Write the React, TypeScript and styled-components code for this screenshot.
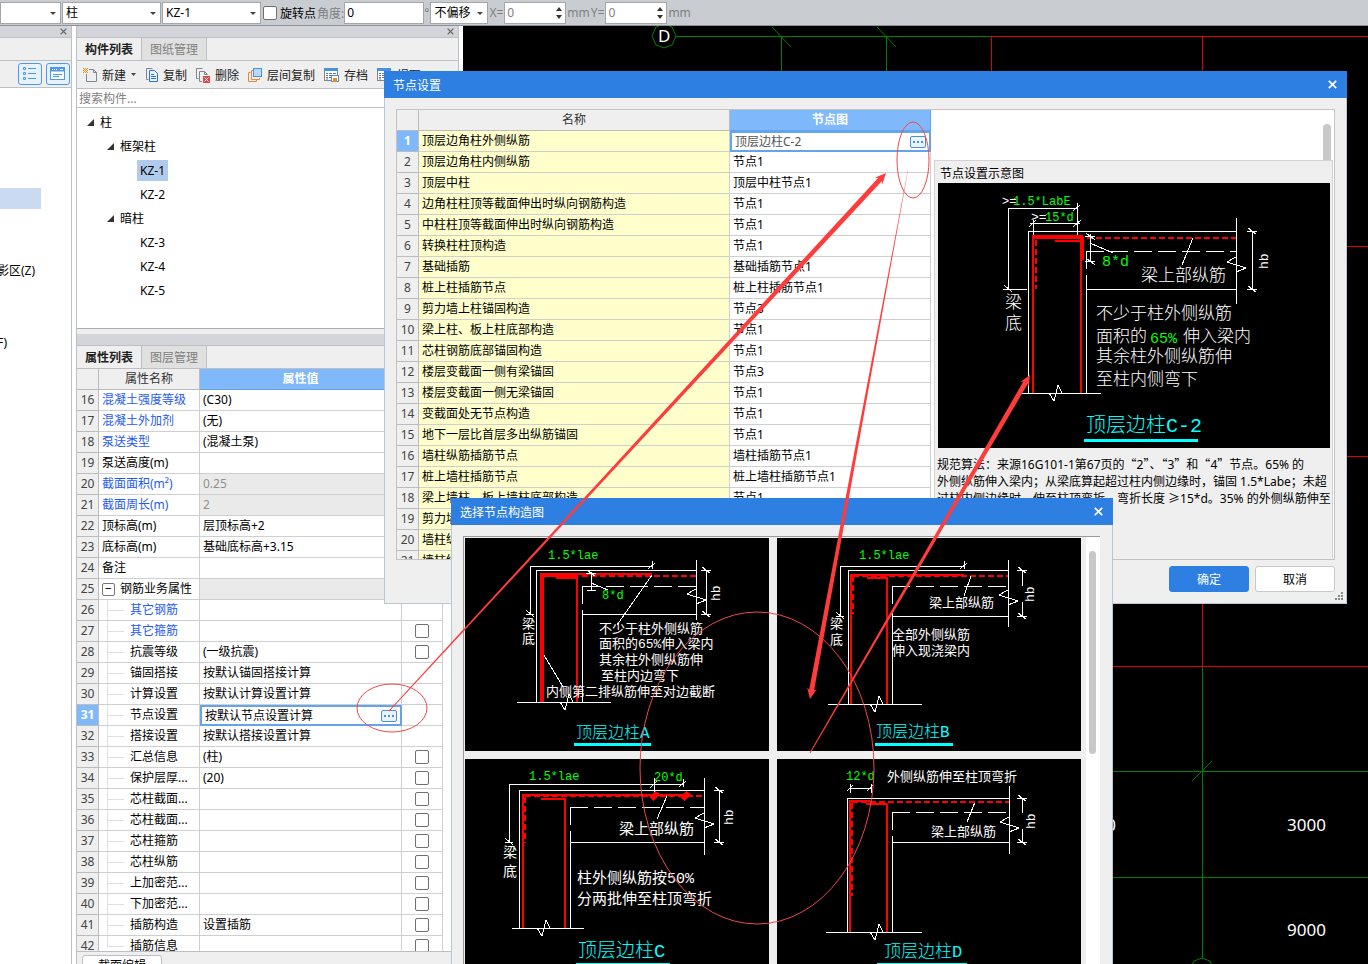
import React from "react";
import styled, { createGlobalStyle } from "styled-components";

const Global = createGlobalStyle`
  html, body, #root { height: 100%; }
  body { margin: 0; overflow: hidden; background: #fff; }
  * { box-sizing: border-box; }
  body, button, input, select, table {
    font-family: "Noto Sans", "Noto Sans CJK SC", sans-serif;
    font-size: 12px;
    color: #000;
  }
`;

/* ---------- shell ---------- */
const Shell = styled.div`
  position: relative;
  display: flex;
  flex-direction: column;
  height: 100vh;
  overflow: hidden;
`;
const OptionBar = styled.header`
  display: flex;
  align-items: center;
  flex: none;
  gap: 1px;
  height: 26px;
  background: #c9cdd1;
  border-bottom: 1px solid #8b9196;
  white-space: nowrap;
`;
const Combo = styled.label<{ $w: number }>`
  position: relative;
  display: flex;
  width: ${(p) => p.$w}px;
  height: 22px;
  &::after {
    content: "";
    position: absolute;
    right: 5px;
    top: 10px;
    border: 3px solid transparent;
    border-top-color: #444;
    border-bottom: 0;
  }
  select {
    appearance: none;
    width: 100%;
    padding: 0 3px;
    border: 1px solid #a3a7aa;
    border-radius: 0;
    background: #fff;
  }
`;
const Check = styled.input.attrs({ type: "checkbox" })`
  appearance: none;
  flex: none;
  width: 14px;
  height: 14px;
  margin: 0;
  border: 1px solid #707070;
  border-radius: 2px;
  background: #fff;
  vertical-align: middle;
`;
const CheckLabel = styled.label`
  display: flex;
  align-items: center;
  gap: 3px;
  margin-left: 1px;
`;
const Dim = styled.label<{ $gap?: number }>`
  display: flex;
  align-items: center;
  gap: ${(p) => p.$gap ?? 0}px;
  color: #808080;
`;
const Field = styled.input<{ $w: number }>`
  width: ${(p) => p.$w}px;
  height: 22px;
  padding: 0 2px;
  border: 1px solid #a3a7aa;
  background: #fff;
  &:disabled { color: #808080; }
`;
const Spin = styled.span`
  position: relative;
  display: flex;
  &::before, &::after {
    content: "";
    position: absolute;
    right: 4px;
    border: 3px solid transparent;
  }
  &::before { top: 5px; border-bottom: 4px solid #333; border-top: 0; }
  &::after { bottom: 5px; border-top: 4px solid #333; border-bottom: 0; }
`;
const Body = styled.main`
  display: flex;
  flex: 1;
  min-height: 0;
`;

/* ---------- docked panels ---------- */
const SidePanel = styled.aside`
  display: flex;
  flex-direction: column;
  flex: none;
  width: 72px;
  margin-right: 4px;
  border-right: 1px solid #bcbfc6;
`;
const Dock = styled.section`
  display: flex;
  flex-direction: column;
  flex: none;
  width: 383px;
  margin-right: 4px;
  border: solid #bcbfc6;
  border-width: 0 1px;
  background: #efefef;
`;
const Strip = styled.div`
  display: flex;
  align-items: center;
  justify-content: flex-end;
  flex: none;
  height: 12px;
  padding-right: 4px;
  background: #d3d5da;
  border-bottom: 1px solid #bcbfc6;
`;
const TinyClose = styled.button`
  display: flex;
  padding: 0;
  border: 0;
  background: none;
`;
const SideBlank = styled.div`
  flex: none;
  height: 23px;
  background: #efefef;
  border-bottom: 1px solid #bcbfc6;
`;
const ViewButtons = styled.div`
  display: flex;
  justify-content: flex-end;
  align-items: center;
  flex: none;
  gap: 4px;
  height: 27px;
  padding-right: 1px;
  background: #efefef;
  border-bottom: 1px solid #bcbfc6;
`;
const ViewButton = styled.button`
  display: flex;
  align-items: center;
  justify-content: center;
  width: 24px;
  height: 22px;
  padding: 0;
  border: 1px solid #4a9bf0;
  border-radius: 3px;
  background: #e8f2fc;
`;
const SideList = styled.ul`
  flex: 1;
  margin: 0;
  padding: 100px 0 0;
  list-style: none;
  line-height: 21px;
  overflow: hidden;
  white-space: nowrap;
`;
const SideItem = styled.li<{ $gap?: number; $on?: boolean }>`
  width: 41px;
  height: 21px;
  margin-bottom: ${(p) => p.$gap ?? 0}px;
  text-indent: -3px;
  background: ${(p) => (p.$on ? "#c9daf1" : "none")};
`;
const Tabs = styled.div`
  display: flex;
  flex: none;
  height: 23px;
  border-bottom: 1px solid #bcbfc6;
`;
const Tab = styled.button<{ $on?: boolean }>`
  width: 65px;
  padding: 0;
  border: 0;
  border-right: 1px solid #bcbfc6;
  background: ${(p) => (p.$on ? "#efefef" : "#e0e0e0")};
  color: ${(p) => (p.$on ? "#222" : "#808080")};
  font-weight: ${(p) => (p.$on ? 700 : 400)};
`;
const Tools = styled.div`
  display: flex;
  align-items: center;
  flex: none;
  gap: 8px;
  height: 28px;
  padding-left: 6px;
  border-bottom: 1px solid #bcbfc6;
  overflow: hidden;
`;
const Tool = styled.button`
  display: flex;
  align-items: center;
  flex: none;
  gap: 4px;
  padding: 0;
  border: 0;
  background: none;
  color: #222;
`;
const Search = styled.input`
  flex: none;
  height: 19px;
  padding: 0 2px;
  border: 0;
  border-bottom: 1px solid #bcbfc6;
  &::placeholder { color: #808080; }
`;
const Tree = styled.ul`
  flex: none;
  height: 221px;
  margin: 0 0 5px;
  padding: 2px 0 0;
  list-style: none;
  background: #fff;
  border-bottom: 1px solid #a8abb0;
`;
const TreeRow = styled.li<{ $level: number }>`
  display: flex;
  align-items: center;
  gap: 3px;
  height: 24px;
  padding-left: ${(p) => 10 + p.$level * 20}px;
`;
const TreeName = styled.button<{ $on?: boolean }>`
  height: 21px;
  padding: 0 3px;
  border: 0;
  background: ${(p) => (p.$on ? "#b0cbec" : "none")};
`;

/* ---------- tables ---------- */
const Clip = styled.div`
  flex: 1;
  min-height: 0;
  overflow: hidden;
  background: #fff;
`;
const Grid = styled.table`
  table-layout: fixed;
  border-spacing: 0;
  line-height: 18px;
  white-space: nowrap;
  th, td {
    height: 21px;
    padding: 0 3px;
    border: solid #cfcfcf;
    border-width: 0 1px 1px 0;
    text-align: left;
    font-weight: 400;
    overflow: hidden;
  }
`;
const HeadCell = styled.th<{ $on?: boolean }>`
  && {
    text-align: center;
    background: ${(p) => (p.$on ? "#80b9fb" : "#efefef")};
    color: ${(p) => (p.$on ? "#fff" : "#333")};
    font-weight: ${(p) => (p.$on ? 700 : 400)};
    border-color: ${(p) => (p.$on ? "#63a4ec" : "#bcbcbc")};
  }
`;
const RowNo = styled.th<{ $on?: boolean }>`
  && {
    padding: 0;
    text-align: center;
    background: ${(p) => (p.$on ? "#80b9fb" : "#efefef")};
    color: ${(p) => (p.$on ? "#fff" : "#444")};
    font-weight: ${(p) => (p.$on ? 700 : 400)};
    border-color: #bcbcbc;
  }
`;
const PropName = styled.td<{ $link?: boolean; $level?: number }>`
  && {
    position: relative;
    color: ${(p) => (p.$link ? "#1e5af5" : "#000")};
    padding-left: ${(p) => (p.$level ? 31 : 3)}px;
  }
`;
const Branch = styled.span<{ $last?: boolean }>`
  position: absolute;
  left: 8px;
  top: 0;
  width: 1px;
  height: ${(p) => (p.$last ? "10px" : "21px")};
  background: #e0e0e0;
  &::after {
    content: "";
    position: absolute;
    top: 10px;
    width: 17px;
    height: 1px;
    background: #e0e0e0;
  }
`;
const GroupCell = styled.span`
  display: flex;
  align-items: center;
  gap: 5px;
`;
const Fold = styled.button`
  display: flex;
  align-items: center;
  justify-content: center;
  width: 13px;
  height: 13px;
  padding: 0;
  border: 1px solid #777;
  border-radius: 2px;
  background: #fff;
  line-height: 10px;
`;
const Value = styled.td<{ $muted?: boolean; $yellow?: boolean }>`
  && {
    background: ${(p) => (p.$muted ? "#eaeaea" : p.$yellow ? "#ffffcc" : "#fff")};
    color: ${(p) => (p.$muted ? "#909090" : "#000")};
  }
`;
const EditCell = styled.td`
  && { padding: 0; border: 0; }
`;
const Editing = styled.div<{ $muted?: boolean }>`
  display: flex;
  align-items: center;
  justify-content: space-between;
  height: 21px;
  padding: 0 3px 0 3px;
  border: 2px solid #63a4ec;
  background: #fff;
  color: ${(p) => (p.$muted ? "#555" : "#000")};
`;
const More = styled.button`
  display: flex;
  align-items: center;
  justify-content: center;
  gap: 2px;
  width: 16px;
  height: 12px;
  padding: 0;
  border: 1px solid #4a90d9;
  border-radius: 2px;
  background: #eaf3fc;
  i { width: 2px; height: 2px; background: #4a90d9; }
`;
const CheckCell = styled.td`
  && { text-align: center; line-height: 0; }
`;
const TableArea = styled.div`
  display: flex;
  flex: 1;
  min-height: 0;
  background: #fff;
`;
const Track = styled.div`
  flex: none;
  width: 10px;
`;
const PropThumb = styled.div`
  width: 6px;
  height: 530px;
  margin-left: 4px;
  border-radius: 3px;
  background: #c8c8c8;
`;
const DockFoot = styled.footer`
  flex: none;
  height: 13px;
  padding: 3px 5px 0;
  border-top: 1px solid #bcbfc6;
  overflow: hidden;
`;
const FootTab = styled.button`
  display: block;
  width: 80px;
  height: 22px;
  padding: 0;
  border: 1px solid #bcbfc6;
  border-radius: 3px;
  background: #fff;
  line-height: 18px;
`;

/* ---------- drawing area ---------- */
const Viewport = styled.section`
  flex: 1;
  min-width: 0;
  background: #000;
  svg { display: block; width: 100%; height: 100%; }
`;

/* ---------- dialogs ---------- */
const Dialog = styled.section<{ $x: number; $y: number; $w: number }>`
  position: absolute;
  left: ${(p) => p.$x}px;
  top: ${(p) => p.$y}px;
  width: ${(p) => p.$w}px;
  background: #efefef;
  border: 1px solid #bcc7d6;
  border-top: 0;
`;
const TitleBar = styled.header`
  display: flex;
  align-items: center;
  justify-content: space-between;
  height: 27px;
  margin: 0 -1px;
  padding: 0 10px 0 9px;
  background: #2d80e2;
  color: #fff;
`;
const TitleText = styled.h2`
  margin: 0;
  font-size: 12px;
  font-weight: 400;
`;
const CloseButton = styled.button`
  display: flex;
  padding: 0;
  border: 0;
  background: none;
`;
const SettingsBody = styled.div`
  display: flex;
  height: 451px;
  margin: 11px 11px 6px;
  border: 1px solid #c4c4c4;
  overflow: hidden;
`;
const NodeTable = styled.div`
  flex: none;
  width: 534px;
  overflow: hidden;
`;
const Detail = styled.div`
  display: flex;
  flex-direction: column;
  flex: 1;
  min-width: 0;
  background: #fff;
`;
const DetailTop = styled.div`
  display: flex;
  justify-content: flex-end;
  flex: none;
  height: 50px;
  padding: 14px 3px 0 0;
`;
const ThumbTop = styled.div`
  width: 8px;
  border-radius: 4px 4px 0 0;
  background: #c8c8c8;
`;
const Sample = styled.div`
  flex: 1;
  margin: 0 1px 0 3px;
  padding: 0 3px;
  background: #efefef;
  border: 1px solid #d4d4d4;
  border-bottom: 0;
  overflow: hidden;
`;
const SampleTitle = styled.h3`
  margin: 0;
  padding: 4px 2px 1px;
  font-size: 12px;
  font-weight: 400;
  line-height: 17px;
`;
const Note = styled.p`
  margin: 7px 0 0 -1px;
  line-height: 17px;
  white-space: pre;
`;
const Quote = styled.span`
  font-family: "Noto Sans CJK SC", sans-serif;
`;
const Buttons = styled.footer`
  display: flex;
  justify-content: flex-end;
  gap: 6px;
  height: 37px;
  padding-right: 11px;
`;
const Action = styled.button<{ $primary?: boolean }>`
  width: 80px;
  height: 26px;
  padding: 0;
  border: 1px solid ${(p) => (p.$primary ? "#2d80e2" : "#c8c8c8")};
  border-radius: 3px;
  background: ${(p) => (p.$primary ? "#2d80e2" : "#fff")};
  color: ${(p) => (p.$primary ? "#fff" : "#000")};
`;
const Grip = styled.svg`
  position: absolute;
  right: 2px;
  bottom: 2px;
`;
const PickerBody = styled.div`
  display: flex;
  height: 461px;
  margin: 11px 12px 0 11px;
  border: solid #9a9a9a;
  border-width: 1px 0 0 1px;
  overflow: hidden;
`;
const Gallery = styled.div`
  display: grid;
  grid-template-columns: 304px 304px;
  grid-auto-rows: 213px;
  gap: 8px;
  padding: 1px;
`;
const Card = styled.button`
  display: block;
  padding: 0;
  border: 0;
  background: #000;
`;
const PickerTrack = styled.div`
  width: 15px;
  margin-left: 4px;
  padding: 14px 4px 0 3px;
  background: #fff;
`;
const PickerThumb = styled.div`
  height: 203px;
  border-radius: 4px;
  background: #c8c8c8;
`;

/* ---------- section drawings ---------- */
const Sheet = styled.svg`
  display: block;
  background: #000;
  line, path { fill: none; stroke: #fff; stroke-width: 1; shape-rendering: crispEdges; }
  .bar { stroke: #f00; stroke-width: 2; }
  .thick { stroke: #f00; stroke-width: 4; }
  .dash { stroke: #f00; stroke-width: 2; stroke-dasharray: 6 3; }
  .under { stroke: #0ff; stroke-width: 3; }
  .fill { fill: #f00; stroke: none; }
`;
const T = styled.text<{ $s: number; $c?: string }>`
  font-family: "Liberation Mono", "Noto Sans CJK SC", monospace;
  font-size: ${(p) => p.$s}px;
  font-weight: ${(p) => (p.$s < 16 ? 400 : 300)};
  fill: ${(p) => p.$c ?? "#fff"};
`;
const GREEN = "#0f0";
const CYAN = "#0ff";

type JointProps = {
  ox: number; oy: number; ix: number; rx: number; sy: number; fy: number;
  by: number; b0: number; b1: number; bz: number;
  r0: number; r1: number; hx: number; ht: number; split?: boolean;
};

/* Column outline, beam outline, break marks and the beam height dimension. */
function Joint({ ox, oy, ix, rx, sy, fy, by, b0, b1, bz, r0, r1, hx, ht, split }: JointProps) {
  const mid = Math.round((oy + fy) / 2);
  return (
    <>
      <path d={`M${ox} ${by}V${oy}H${rx}`} />
      <path d={`M${ix} ${sy}V${sy + 18}M${ix} ${sy + 24}V${by}`} />
      <path d={`M${ix} ${sy}H${rx}`} strokeDasharray="18 6" />
      <path d={`M${ix} ${fy}H${rx}`} />
      <path d={`M${rx} ${r0}V${r1}M${rx} ${mid - 3}l-9 5l19 6l-10 4`} />
      <path d={`M${b0} ${by}H${b1}M${bz} ${by}l5 8l4 -16l4 8`} />
      <path d={split ? `M${hx} ${oy}V${mid - 7}M${hx} ${mid + 9}V${fy}` : `M${hx} ${oy}V${fy}`} />
      <path d={`M${hx - 5} ${oy}h10M${hx - 5} ${fy}h10M${hx - 4} ${oy - 3}l8 6M${hx - 4} ${fy - 3}l8 6`} />
      <T $s={13} x={0} y={0} transform={`translate(${ht} ${mid + 9}) rotate(-90)`}>hb</T>
    </>
  );
}

/* Anchor length dimension running from the beam soffit up and over the column. */
function Anchor({ x, y, end, foot }: { x: number; y: number; end: number; foot: number }) {
  return (
    <path d={`M${x - 4} ${foot}h8M${x - 4} ${foot - 4}l8 7M${x} ${foot}V${y}H${end}M${end} ${y - 5}v8M${end - 4} ${y + 3}l7 -6`} />
  );
}

function SheetC2() {
  return (
    <Sheet width="392" height="265" role="img" aria-label="顶层边柱C-2">
      <Joint ox={90} oy={48} ix={148} rx={298} sy={68} fy={106} by={210} b0={83} b1={163} bz={111} r0={35} r1={121} hx={314} ht={330} />
      <Anchor x={70} y={25} end={139} foot={106} />
      <path d="M65 106h24M95 37v18M139 21v35M92 40h50M91 44l7 -7M135 44l8 -7" />
      <path className="bar" d="M95 210V53H145M117 58h27M143 53V210" />
      <path className="thick" d="M95 54H145M144 54V77" />
      <path className="dash" d="M98 57V106M95 55H298" />
      <path d="M152 51V78M147 53h10M147 78h10M148 50l9 7M148 75l9 7M152 60L175 70M255 55L244 82" />
      <T $s={12} x={64} y={22}>&gt;=</T>
      <T $s={12} $c={GREEN} x={75} y={22}>1.5*LabE</T>
      <T $s={13} x={93} y={38}>&gt;=</T>
      <T $s={12} $c={GREEN} x={107} y={38}>15*d</T>
      <T $s={15} $c={GREEN} x={164} y={83}>8*d</T>
      <T $s={17} x={203} y={98}>梁上部纵筋</T>
      <T $s={17} x={67} y={125}>梁</T>
      <T $s={17} x={67} y={146}>底</T>
      <T $s={17} x={158} y={136}>不少于柱外侧纵筋</T>
      <T $s={17} x={158} y={159}>面积的</T>
      <T $s={15} $c={GREEN} x={212} y={160}>65%</T>
      <T $s={17} x={245} y={159}>伸入梁内</T>
      <T $s={17} x={158} y={179}>其余柱外侧纵筋伸</T>
      <T $s={17} x={158} y={202}>至柱内侧弯下</T>
      <T $s={20} $c={CYAN} x={148} y={249}>顶层边柱C-2</T>
      <path className="under" d="M146 257H260" />
    </Sheet>
  );
}

function SheetA() {
  return (
    <Sheet width="304" height="213" role="img" aria-label="顶层边柱A">
      <Joint ox={71} oy={32} ix={117} rx={231} sy={48} fy={76} by={164} b0={52} b1={146} bz={95} r0={22} r1={82} hx={241} ht={255} />
      <Anchor x={65} y={28} end={187} foot={76} />
      <path className="thick" d="M77 164V37H113" />
      <path className="bar" d="M75 36H187M91 40h22M112 36V164" />
      <path className="thick" d="M91 39H113" />
      <path className="dash" d="M117 38H231" />
      <path d="M126 34V52M121 35h10M122 52h9M122 32l8 6M126 45L143 52M187 37L152 87M79 117L98 149" />
      <T $s={12} $c={GREEN} x={83} y={21}>1.5*lae</T>
      <T $s={12} $c={GREEN} x={137} y={61}>8*d</T>
      <T $s={13} x={57} y={90}>梁</T>
      <T $s={13} x={57} y={105}>底</T>
      <T $s={13} x={134} y={95}>不少于柱外侧纵筋</T>
      <T $s={13} x={134} y={110}>面积的65%伸入梁内</T>
      <T $s={13} x={134} y={126}>其余柱外侧纵筋伸</T>
      <T $s={13} x={136} y={142}>至柱内边弯下</T>
      <T $s={13} x={81} y={158}>内侧第二排纵筋伸至对边截断</T>
      <T $s={16} $c={CYAN} x={111} y={200}>顶层边柱A</T>
      <path className="under" d="M109 206H186" />
    </Sheet>
  );
}

function SheetB() {
  return (
    <Sheet width="304" height="213" role="img" aria-label="顶层边柱B">
      <Joint ox={71} oy={32} ix={115} rx={231} sy={48} fy={78} by={166} b0={51} b1={145} bz={93} r0={22} r1={89} hx={245} ht={257} split />
      <Anchor x={63} y={28} end={187} foot={78} />
      <path className="bar" d="M74 166V37H187M90 40h20M110 39V166" />
      <path className="dash" d="M76 38V76M76 38H231" />
      <path d="M194 38L187 58" />
      <T $s={12} $c={GREEN} x={82} y={21}>1.5*lae</T>
      <T $s={13} x={152} y={69}>梁上部纵筋</T>
      <T $s={13} x={53} y={90}>梁</T>
      <T $s={13} x={53} y={106}>底</T>
      <T $s={13} x={115} y={101}>全部外侧纵筋</T>
      <T $s={13} x={115} y={117}>伸入现浇梁内</T>
      <T $s={16} $c={CYAN} x={99} y={199}>顶层边柱B</T>
      <path className="under" d="M98 206H176" />
    </Sheet>
  );
}

function SheetC() {
  return (
    <Sheet width="304" height="213" role="img" aria-label="顶层边柱C">
      <Joint ox={54} oy={31} ix={105} rx={239} sy={48} fy={83} by={169} b0={47} b1={119} bz={72} r0={19} r1={96} hx={254} ht={268} />
      <Anchor x={44} y={25} end={218} foot={83} />
      <path d="M189 19v14M185 29l7 -7M202 37L192 60" />
      <path className="bar" d="M58 169V36H220M76 40h24M100 39V169" />
      <path className="dash" d="M60 38V84M60 37H239" />
      <path className="fill" d="M184 38l6 -6l5 3l-6 7zM215 38l6 -6l5 3l-6 7z" />
      <T $s={12} $c={GREEN} x={64} y={21}>1.5*lae</T>
      <T $s={12} $c={GREEN} x={189} y={22}>20*d</T>
      <T $s={15} x={154} y={75}>梁上部纵筋</T>
      <T $s={14} x={38} y={98}>梁</T>
      <T $s={14} x={38} y={117}>底</T>
      <T $s={15} x={112} y={124}>柱外侧纵筋按50%</T>
      <T $s={15} x={112} y={145}>分两批伸至柱顶弯折</T>
      <T $s={19} $c={CYAN} x={113} y={198}>顶层边柱C</T>
      <path className="under" d="M111 205H205" />
    </Sheet>
  );
}

function SheetD() {
  return (
    <Sheet width="304" height="213" role="img" aria-label="顶层边柱D">
      <Joint ox={70} oy={39} ix={115} rx={232} sy={53} fy={83} by={173} b0={49} b1={145} bz={93} r0={27} r1={95} hx={245} ht={258} split />
      <path d="M73 25v9M94 25v9M73 29H94M70 32l6 -6M90 32l6 -6M198 43L190 63" />
      <path className="bar" d="M73 173V42H93M89 45h21M110 45V173" />
      <path className="dash" d="M75 44V137M75 43H232" />
      <T $s={12} $c={GREEN} x={69} y={21}>12*d</T>
      <T $s={13} x={110} y={22}>外侧纵筋伸至柱顶弯折</T>
      <T $s={13} x={154} y={77}>梁上部纵筋</T>
      <T $s={17} $c={CYAN} x={107} y={198}>顶层边柱D</T>
      <path className="under" d="M100 205H190" />
    </Sheet>
  );
}

/* ---------- icons ---------- */
const Cross = ({ size, color }: { size: number; color: string }) => (
  <svg width={size} height={size} viewBox="0 0 8 8">
    <path d="M0.7 0.7L7.3 7.3M7.3 0.7L0.7 7.3" stroke={color} strokeWidth="1.5" />
  </svg>
);
const Expander = () => (
  <svg width="7" height="7" viewBox="0 0 7 7">
    <path d="M7 0V7H0Z" fill="#333" />
  </svg>
);
const NewIcon = () => (
  <svg width="15" height="16" fill="none">
    <path d="M6 2.500H10.500L13.500 5.500V14.500H3.500V7M10.500 2.500V5.500H13.500" stroke="#7d8790" />
    <path d="M0 1h1v1h-1zM2 1h1v1h-1zM4 1h1v1h-1zM1 2h1v1h-1zM3 2h1v1h-1zM0 3h1v1h-1zM4 3h1v1h-1zM2 3h1v1h-1zM1 4h1v1h-1zM3 4h1v1h-1zM0 5h1v1h-1zM2 5h1v1h-1zM4 5h1v1h-1z" fill="#f08a1d" />
  </svg>
);
const CopyIcon = () => (
  <svg width="14" height="16" fill="none">
    <path d="M3.500 12.500H1.500V1.500H7.500" stroke="#7d8790" />
    <path d="M4.500 3.500H9.500L12.500 6.500V14.500H4.500Z" fill="#e8f2fc" stroke="#2d74cc" />
    <path d="M6 7.500h3M6 9.500h5M6 11.500h5" stroke="#2d74cc" />
  </svg>
);
const DeleteIcon = () => (
  <svg width="16" height="16" fill="none">
    <path d="M3.500 11.500H1.500V1.500H7.500M7 14.500H4.500V4.500H9.500L12.500 7.500V8M9.500 4.500V7.500H12" stroke="#7d8790" />
    <rect x="8" y="9" width="7" height="7" fill="#d94848" />
    <path d="M9.500 10.500l4 4M13.500 10.500l-4 4" stroke="#fff" />
  </svg>
);
const LayerIcon = () => (
  <svg width="16" height="16" fill="none">
    <path d="M3.500 5.500H1.500V14.500H9.500V12M6 3.500H4.500V12.500H12.500V11" stroke="#e58a3c" />
    <rect x="6.500" y="1.500" width="8" height="8" fill="#b9d8fb" stroke="#4a90e2" />
  </svg>
);
const ArchiveIcon = ({ orange = true }: { orange?: boolean }) => (
  <svg width="17" height="16" fill="none">
    <rect x="1.500" y="1.500" width="13" height="12" fill="#fff" stroke="#7d8790" />
    <path d="M1 2.500h14" stroke="#4a90e2" strokeWidth="3" />
    <path d="M3 6.500h2M6 6.500h3M10 6.500h3M3 8.500h2M6 8.500h3M3 10.500h2M6 10.500h2M3 12h2" stroke="#6d7882" />
    <rect x="8.500" y="8.500" width="7" height="6" fill="#fff" stroke="#4a90e2" />
    <rect x="10" y="11" width="4" height="4" fill={orange ? "#f08a1d" : "#4a90e2"} />
  </svg>
);
const ListIcon = () => (
  <svg width="14" height="14" fill="none" stroke="#4a9bf0">
    <path d="M0.500 0.500h2v2h-2zM0.500 5.500h2v2h-2zM0.500 10.500h2v2h-2zM5 1.500h8M5 6.500h8M5 11.500h8" />
  </svg>
);
const CardIcon = () => (
  <svg width="16" height="14" fill="none" stroke="#4a9bf0">
    <rect x="0.500" y="0.500" width="14" height="12" fill="#fff" />
    <path d="M0 2.500h15" strokeWidth="4" />
    <path d="M3 7.500h9M3 9.500h6" />
    <path d="M2 2.500h1M4 2.500h1M6 2.500h1M10 2.500h3" stroke="#fff" />
  </svg>
);
const Caret = () => (
  <svg width="7" height="4">
    <path d="M1 0H6L3.500 3Z" fill="#444" />
  </svg>
);

/* ---------- data ---------- */
type Prop = { no: number; name: string; value?: string; link?: boolean; muted?: boolean; check?: boolean };
const props: Prop[] = [
  { no: 16, name: "混凝土强度等级", value: "(C30)", link: true },
  { no: 17, name: "混凝土外加剂", value: "(无)", link: true },
  { no: 18, name: "泵送类型", value: "(混凝土泵)", link: true },
  { no: 19, name: "泵送高度(m)" },
  { no: 20, name: "截面面积(m²)", value: "0.25", link: true, muted: true },
  { no: 21, name: "截面周长(m)", value: "2", link: true, muted: true },
  { no: 22, name: "顶标高(m)", value: "层顶标高+2" },
  { no: 23, name: "底标高(m)", value: "基础底标高+3.15" },
  { no: 24, name: "备注" },
  { no: 25, name: "钢筋业务属性", muted: true },
  { no: 26, name: "其它钢筋", link: true },
  { no: 27, name: "其它箍筋", link: true, check: true },
  { no: 28, name: "抗震等级", value: "(一级抗震)", check: true },
  { no: 29, name: "锚固搭接", value: "按默认锚固搭接计算" },
  { no: 30, name: "计算设置", value: "按默认计算设置计算" },
  { no: 31, name: "节点设置", value: "按默认节点设置计算" },
  { no: 32, name: "搭接设置", value: "按默认搭接设置计算" },
  { no: 33, name: "汇总信息", value: "(柱)", check: true },
  { no: 34, name: "保护层厚...", value: "(20)", check: true },
  { no: 35, name: "芯柱截面...", check: true },
  { no: 36, name: "芯柱截面...", check: true },
  { no: 37, name: "芯柱箍筋", check: true },
  { no: 38, name: "芯柱纵筋", check: true },
  { no: 39, name: "上加密范...", check: true },
  { no: 40, name: "下加密范...", check: true },
  { no: 41, name: "插筋构造", value: "设置插筋", check: true },
  { no: 42, name: "插筋信息", check: true },
];
const nodes: [string, string][] = [
  ["顶层边角柱外侧纵筋", "顶层边柱C-2"],
  ["顶层边角柱内侧纵筋", "节点1"],
  ["顶层中柱", "顶层中柱节点1"],
  ["边角柱柱顶等截面伸出时纵向钢筋构造", "节点1"],
  ["中柱柱顶等截面伸出时纵向钢筋构造", "节点1"],
  ["转换柱柱顶构造", "节点1"],
  ["基础插筋", "基础插筋节点1"],
  ["桩上柱插筋节点", "桩上柱插筋节点1"],
  ["剪力墙上柱锚固构造", "节点3"],
  ["梁上柱、板上柱底部构造", "节点1"],
  ["芯柱钢筋底部锚固构造", "节点1"],
  ["楼层变截面一侧有梁锚固", "节点3"],
  ["楼层变截面一侧无梁锚固", "节点1"],
  ["变截面处无节点构造", "节点1"],
  ["地下一层比首层多出纵筋锚固", "节点1"],
  ["墙柱纵筋插筋节点", "墙柱插筋节点1"],
  ["桩上墙柱插筋节点", "桩上墙柱插筋节点1"],
  ["梁上墙柱、板上墙柱底部构造", "节点1"],
  ["剪力墙上墙柱锚固构造", "节点1"],
  ["墙柱纵筋锚固构造", "节点1"],
  ["墙柱纵筋顶层构造", "节点1"],
];
const tree: { level: number; name: string; open?: boolean; on?: boolean }[] = [
  { level: 0, name: "柱", open: true },
  { level: 1, name: "框架柱", open: true },
  { level: 2, name: "KZ-1", on: true },
  { level: 2, name: "KZ-2" },
  { level: 1, name: "暗柱", open: true },
  { level: 2, name: "KZ-3" },
  { level: 2, name: "KZ-4" },
  { level: 2, name: "KZ-5" },
];
const note =
  "规范算法：来源16G101-1第67页的“2”、“3”和“4”节点。65% 的\n外侧纵筋伸入梁内；从梁底算起超过柱内侧边缘时，锚固 1.5*Labe；未超\n过柱内侧边缘时，伸至柱顶弯折，弯折长度 ≥15*d。35% 的外侧纵筋伸至";

const MoreButton = () => (
  <More aria-label="更多">
    <i /><i /><i />
  </More>
);

function Options() {
  return (
    <OptionBar>
      <Combo $w={61}><select aria-label="楼层"><option></option></select></Combo>
      <Combo $w={99}><select aria-label="构件类型"><option>柱</option></select></Combo>
      <Combo $w={99}><select aria-label="构件"><option>KZ-1</option></select></Combo>
      <CheckLabel><Check />旋转点</CheckLabel>
      <Dim>角度:<Field $w={80} defaultValue="0" />°</Dim>
      <Combo $w={58}><select aria-label="偏移"><option>不偏移</option></select></Combo>
      <Dim $gap={1}>X=<Spin><Field $w={62} defaultValue="0" disabled /></Spin>mm</Dim>
      <Dim $gap={1}>Y=<Spin><Field $w={62} defaultValue="0" disabled /></Spin>mm</Dim>
    </OptionBar>
  );
}

function Side() {
  return (
    <SidePanel>
      <Strip><TinyClose aria-label="关闭"><Cross size={7} color="#666" /></TinyClose></Strip>
      <SideBlank />
      <ViewButtons>
        <ViewButton aria-label="列表"><ListIcon /></ViewButton>
        <ViewButton aria-label="卡片"><CardIcon /></ViewButton>
      </ViewButtons>
      <SideList>
        <SideItem $on $gap={51} />
        <SideItem $gap={51}>影区(Z)</SideItem>
        <SideItem>F)</SideItem>
      </SideList>
    </SidePanel>
  );
}

function PropertyTable() {
  return (
    <Grid style={{ width: 366 }}>
      <colgroup><col width="22" /><col width="101" /><col width="202" /><col width="41" /></colgroup>
      <thead>
        <tr>
          <HeadCell />
          <HeadCell>属性名称</HeadCell>
          <HeadCell $on>属性值</HeadCell>
          <HeadCell />
        </tr>
      </thead>
      <tbody>
        {props.map((p) => (
          <tr key={p.no}>
            <RowNo $on={p.no === 31}>{p.no}</RowNo>
            <PropName $link={p.link} $level={p.no > 25 ? 1 : 0}>
              {p.no > 25 && <Branch $last={p.no === 42} />}
              {p.no === 25 ? <GroupCell><Fold aria-label="收起">−</Fold>{p.name}</GroupCell> : p.name}
            </PropName>
            {p.no === 31 ? (
              <EditCell><Editing>{p.value}<MoreButton /></Editing></EditCell>
            ) : (
              <Value $muted={p.muted}>{p.value}</Value>
            )}
            <CheckCell>{p.check && <Check aria-label={p.name} />}</CheckCell>
          </tr>
        ))}
      </tbody>
    </Grid>
  );
}

function Components() {
  return (
    <Dock>
      <Strip><TinyClose aria-label="关闭"><Cross size={7} color="#666" /></TinyClose></Strip>
      <Tabs><Tab $on>构件列表</Tab><Tab>图纸管理</Tab></Tabs>
      <Tools>
        <Tool><NewIcon />新建<Caret /></Tool>
        <Tool><CopyIcon />复制</Tool>
        <Tool><DeleteIcon />删除</Tool>
        <Tool><LayerIcon />层间复制</Tool>
        <Tool><ArchiveIcon />存档</Tool>
        <Tool><ArchiveIcon orange={false} />提取</Tool>
      </Tools>
      <Search placeholder="搜索构件..." aria-label="搜索构件" />
      <Tree>
        {tree.map((t) => (
          <TreeRow key={t.name} $level={t.level + (t.level === 2 ? 0.5 : 0)}>
            {t.open && <Expander />}
            <TreeName $on={t.on}>{t.name}</TreeName>
          </TreeRow>
        ))}
      </Tree>
      <Strip />
      <Tabs><Tab $on>属性列表</Tab><Tab>图层管理</Tab></Tabs>
      <TableArea>
        <Clip><PropertyTable /></Clip>
        <Track><PropThumb /></Track>
      </TableArea>
      <DockFoot><FootTab>截面编辑</FootTab></DockFoot>
    </Dock>
  );
}

const CadText = styled.text`
  font-family: "Noto Sans", sans-serif;
  font-size: 17px;
  fill: #fff;
`;

function Plan() {
  const bubble = (cx: number, cy: number) =>
    `M${cx} ${cy - 12}l8 3l4 9l-4 9l-8 3l-8 -3l-4 -9l4 -9z`;
  return (
    <Viewport>
      <svg>
        <g fill="none" stroke="#008000" strokeWidth="1">
          <path d="M213 10.500H528M318.500 10.500V60M423.500 10.500V60M309 1l19 20M414 1l19 20" />
          <path d="M600 745.500H2000M600 851.500H2000M739.500 641V932M729 755l20 -20" />
          <path d={bubble(201, 10)} />
          <path d={bubble(739, 944)} />
        </g>
        <path d="M528 10.500H2000M528.500 10V60M739.500 10V641M800 220.500H2000M800 430.500H2000M600 640.500H2000" fill="none" stroke="#e00000" />
        <CadText x="195" y="16">D</CadText>
        <CadText x="614" y="805">3000</CadText>
        <CadText x="824" y="805">3000</CadText>
        <CadText x="824" y="910">9000</CadText>
      </svg>
    </Viewport>
  );
}

function NodeSettings() {
  return (
    <Dialog $x={384} $y={71} $w={963} role="dialog" aria-label="节点设置">
      <TitleBar>
        <TitleText>节点设置</TitleText>
        <CloseButton aria-label="关闭"><Cross size={9} color="#fff" /></CloseButton>
      </TitleBar>
      <SettingsBody>
        <NodeTable>
          <Grid style={{ width: 534 }}>
            <colgroup><col width="22" /><col width="311" /><col width="201" /></colgroup>
            <thead><tr><HeadCell /><HeadCell>名称</HeadCell><HeadCell $on>节点图</HeadCell></tr></thead>
            <tbody>
              {nodes.map(([name, value], i) => (
                <tr key={name}>
                  <RowNo $on={i === 0}>{i + 1}</RowNo>
                  <Value $yellow>{name}</Value>
                  {i === 0 ? (
                    <EditCell><Editing $muted>{value}<MoreButton /></Editing></EditCell>
                  ) : (
                    <Value>{value}</Value>
                  )}
                </tr>
              ))}
            </tbody>
          </Grid>
        </NodeTable>
        <Detail>
          <DetailTop><ThumbTop /></DetailTop>
          <Sample>
            <SampleTitle>节点设置示意图</SampleTitle>
            <SheetC2 />
            <Note>
              {note.split(/([“”])/).map((part, i) =>
                part === "“" || part === "”" ? <Quote key={i}>{part}</Quote> : part
              )}
            </Note>
          </Sample>
        </Detail>
      </SettingsBody>
      <Buttons>
        <Action $primary>确定</Action>
        <Action>取消</Action>
      </Buttons>
      <Grip width="9" height="9" fill="#888">
        <path d="M6 0h2v2h-2zM3 3h2v2h-2zM6 3h2v2h-2zM0 6h2v2h-2zM3 6h2v2h-2zM6 6h2v2h-2z" />
      </Grip>
    </Dialog>
  );
}

function NodePicker() {
  return (
    <Dialog $x={451} $y={498} $w={662} role="dialog" aria-label="选择节点构造图">
      <TitleBar>
        <TitleText>选择节点构造图</TitleText>
        <CloseButton aria-label="关闭"><Cross size={9} color="#fff" /></CloseButton>
      </TitleBar>
      <PickerBody>
        <Gallery>
          <Card><SheetA /></Card>
          <Card><SheetB /></Card>
          <Card><SheetC /></Card>
          <Card><SheetD /></Card>
        </Gallery>
        <PickerTrack><PickerThumb /></PickerTrack>
      </PickerBody>
    </Dialog>
  );
}

/* ---------- hand-drawn marks over the windows ---------- */
const Overlay = styled.svg`
  position: absolute;
  inset: 0;
  width: 100%;
  height: 100%;
  pointer-events: none;
`;

function Arrow({ from, to, tail = 0.5 }: { from: [number, number]; to: [number, number]; tail?: number }) {
  const dx = to[0] - from[0];
  const dy = to[1] - from[1];
  const len = Math.hypot(dx, dy);
  const ux = dx / len;
  const uy = dy / len;
  const at = (back: number, side: number) =>
    `${to[0] - ux * back - uy * side},${to[1] - uy * back + ux * side}`;
  const points = [at(len, tail), at(9, 2.5), at(11, 5), at(0, 0), at(11, -5), at(9, -2.5), at(len, -tail)];
  return <polygon points={points.join(" ")} fill="#ff3b3b" />;
}

function Marks() {
  return (
    <Overlay aria-hidden="true">
      <g fill="none" stroke="#f04848" strokeWidth="1">
        <ellipse cx="392" cy="708" rx="35" ry="24" />
        <ellipse cx="913" cy="160" rx="16" ry="38" />
        <ellipse cx="757" cy="768" rx="117" ry="156" />
      </g>
      <Arrow from={[389, 711]} to={[886, 173]} />
      <Arrow from={[908, 170]} to={[810, 699]} tail={0.1} />
      <Arrow from={[810, 753]} to={[1030, 375]} />
    </Overlay>
  );
}

export default function App() {
  return (
    <Shell>
      <Global />
      <Options />
      <Body>
        <Side />
        <Components />
        <Plan />
      </Body>
      <NodeSettings />
      <NodePicker />
      <Marks />
    </Shell>
  );
}
